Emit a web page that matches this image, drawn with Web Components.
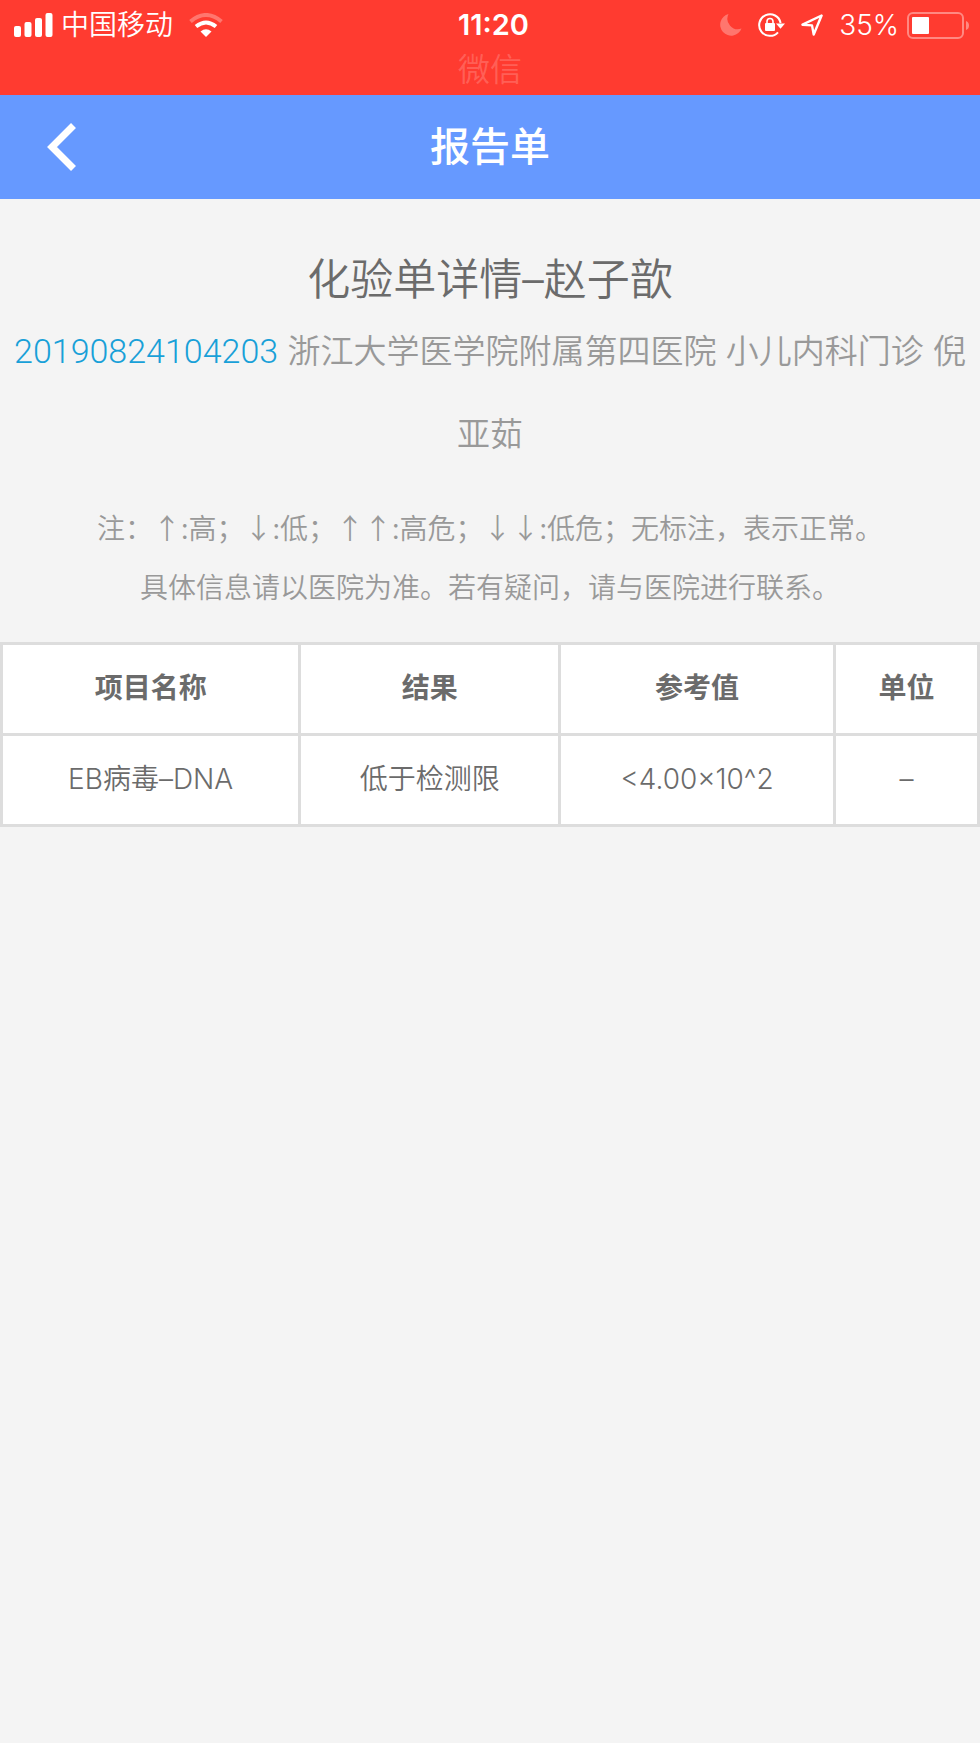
<!DOCTYPE html>
<html lang="zh-CN">
<head>
<meta charset="utf-8">
<meta name="viewport" content="width=device-width, initial-scale=1">
<title>报告单</title>
<style>
    body{
        margin: 0;
        background: #f4f4f4;
        color: #6b6b6b;
        font-family: Inter, "Noto Sans CJK SC", sans-serif;
    }
</style>
</head>
<body>
<status-bar>
    <span slot="carrier">中国移动</span>
    <span slot="time">11:20</span>
    <span slot="battery">35%</span>
    <span slot="app">微信</span>
</status-bar>
<nav-header>报告单</nav-header>
<report-detail>
    <span slot="title">化验单详情–赵子歆</span>
    <span slot="number">20190824104203</span>
    <span slot="source">浙江大学医学院附属第四医院 小儿内科门诊 倪亚茹</span>
    <span slot="note">注：↑:高；↓:低；↑↑:高危；↓↓:低危；无标注，表示正常。<br>具体信息请以医院为准。若有疑问，请与医院进行联系。</span>
</report-detail>
<result-table></result-table>

<script>
const statusTemplate = document.createElement("template");
statusTemplate.innerHTML = `
<style>
    :host{
        display: block;
        height: 95px;
        background: #ff3b30;
        color: #fff;
        font-size: 28px;
    }
    .Status_row{
        display: grid;
        grid-template-columns: 1fr auto 1fr;
        align-items: center;
        height: 50px;
        padding: 0 7px 0 14px;
        line-height: 50px;
    }
    .Status_side{
        display: flex;
        align-items: center;
        gap: 16px;
        font-weight: 350;
    }
    .Status_side--end{
        justify-content: flex-end;
    }
    .Status_pair{
        display: flex;
        align-items: center;
        gap: 8px;
    }
    .Status_time{
        font-size: 29px;
        font-weight: 600;
    }
    .Status_app{
        font-size: 32px;
        font-weight: 350;
        line-height: 40px;
        text-align: center;
        color: rgba(255,255,255,.2);
    }
    svg{
        display: block;
        flex: none;
    }
</style>
<div class="Status_row">
    <div class="Status_side">
        <div class="Status_pair">
            <svg width="39" height="24" viewBox="0 0 39 24" fill="#fff">
                <rect x="0" y="13" width="7" height="11" rx="2"/>
                <rect x="10.500" y="9" width="7" height="15" rx="2"/>
                <rect x="21" y="5" width="7" height="19" rx="2"/>
                <rect x="31.500" y="0" width="7" height="24" rx="2"/>
            </svg>
            <slot name="carrier"></slot>
        </div>
        <svg width="34" height="24" viewBox="0 0 34 24" fill="none" stroke="#fff">
            <path d="M1.500 8.500Q17-4.500 32.500 8.500" stroke-width="4" opacity=".3"/>
            <path d="M7 13.500Q17 5.500 27 13.500" stroke-width="4"/>
            <path d="M11.500 18.500Q17 14 22.500 18.500L17 24z" fill="#fff" stroke="none"/>
        </svg>
    </div>
    <div class="Status_time"><slot name="time"></slot></div>
    <div class="Status_side Status_side--end">
        <svg width="22" height="22" viewBox="0 0 22 22">
            <path d="M8.500 0A11 11 0 1 0 21.500 14.500A10.500 10.500 0 0 1 8.500 0z" fill="#fff" opacity=".3"/>
        </svg>
        <svg width="27" height="24" viewBox="0 0 27 24">
            <path d="M20 19.300A10.800 10.800 0 1 1 22.600 10" fill="none" stroke="#fff" stroke-width="2"/>
            <path d="M18 10.500H27L22.500 15.800z" fill="#fff"/>
            <rect x="7" y="10" width="10" height="8" rx="1" fill="#fff"/>
            <path d="M9 10.500V8.500a3 3 0 0 1 6 0V10.500" fill="none" stroke="#fff" stroke-width="1.600"/>
        </svg>
        <svg width="22" height="22" viewBox="0 0 22 22" fill="none" stroke="#fff" stroke-width="2.400" stroke-linejoin="round">
            <path d="M20.600 1.500L1.500 10.700L11 11.400L12.700 20.500z"/>
        </svg>
        <div class="Status_pair">
            <slot name="battery"></slot>
            <svg width="66" height="27" viewBox="0 0 66 27">
                <rect x="1" y="1" width="55" height="25" rx="5" fill="none" stroke="#fff" stroke-width="2" opacity=".4"/>
                <rect x="5" y="5" width="17" height="17" rx="1" fill="#fff"/>
                <path d="M59 9q3 1 3 4.500t-3 4.500z" fill="#fff" opacity=".4"/>
            </svg>
        </div>
    </div>
</div>
<div class="Status_app"><slot name="app"></slot></div>`;

class StatusBar extends HTMLElement{
    constructor(){
        super();
        this.attachShadow({mode:"open"})
        this.shadowRoot.appendChild(statusTemplate.content.cloneNode(true));
    }
}

const navTemplate = document.createElement("template");
navTemplate.innerHTML = `
<style>
    :host{
        display: grid;
        grid-template-columns: 1fr auto 1fr;
        align-items: center;
        height: 104px;
        background: #6699ff;
        color: #fff;
    }
    .Nav_back{
        justify-self: start;
        margin: 0 0 0 47px;
        padding: 0;
        border: 0;
        background: none;
        color: inherit;
    }
    .Nav_back svg{
        display: block;
    }
    .Nav_title{
        margin: 0;
        font-size: 40px;
        font-weight: 500;
        line-height: 56px;
    }
</style>
<button class="Nav_back" type="button" aria-label="返回">
    <svg width="30" height="50" viewBox="0 0 30 50" fill="none" stroke="currentColor" stroke-width="7">
        <path d="M26.500 3.500L5 25L26.500 46.500"/>
    </svg>
</button>
<h1 class="Nav_title"><slot></slot></h1>`;

class NavHeader extends HTMLElement{
    constructor(){
        super();
        this.attachShadow({mode:"open"})
        this.shadowRoot.appendChild(navTemplate.content.cloneNode(true));
    }
}

const detailTemplate = document.createElement("template");
detailTemplate.innerHTML = `
<style>
    :host{
        display: block;
        padding: 49px 8px 26px;
        text-align: center;
        color: #999;
    }
    h2, p{
        margin: 0;
        font-weight: 350;
    }
    .Detail_title{
        font-size: 43px;
        line-height: 62px;
        color: #6b6b6b;
    }
    .Detail_source{
        font-size: 33px;
        line-height: 83px;
    }
    .Detail_number{
        font-family: Roboto, sans-serif;
        font-size: 34px;
        color: #18a0d8;
    }
    .Detail_note{
        margin-top: 22px;
        font-family: "Noto Sans CJK SC", sans-serif;
        font-size: 28px;
        line-height: 59px;
    }
</style>
<h2 class="Detail_title"><slot name="title"></slot></h2>
<p class="Detail_source"><span class="Detail_number"><slot name="number"></slot></span> <slot name="source"></slot></p>
<p class="Detail_note"><slot name="note"></slot></p>`;

class ReportDetail extends HTMLElement{
    constructor(){
        super();
        this.attachShadow({mode:"open"})
        this.shadowRoot.appendChild(detailTemplate.content.cloneNode(true));
    }
}

const tableTemplate = document.createElement("template");
tableTemplate.innerHTML = `
<style>
    :host{
        display: block;
    }
    table{
        width: 100%;
        table-layout: fixed;
        border-collapse: collapse;
        background: #fff;
        font-size: 28px;
        line-height: 40px;
    }
    th, td{
        height: 85px;
        padding: 0 0 3px;
        border: 3px solid #ddd;
        text-align: center;
        font-weight: 350;
    }
    th{
        font-weight: 700;
    }
    .Table_name{ width: 30.6% }
    .Table_result{ width: 26.6% }
    .Table_range{ width: 28.2% }
    .Table_unit{ width: 14.6% }
</style>
<table>
    <thead>
        <tr>
            <th class="Table_name" scope="col">项目名称</th>
            <th class="Table_result" scope="col">结果</th>
            <th class="Table_range" scope="col">参考值</th>
            <th class="Table_unit" scope="col">单位</th>
        </tr>
    </thead>
    <tbody>
        <tr>
            <td>EB病毒–DNA</td>
            <td>低于检测限</td>
            <td>&lt;4.00×10^2</td>
            <td>–</td>
        </tr>
    </tbody>
</table>`;

class ResultTable extends HTMLElement{
    constructor(){
        super();
        this.attachShadow({mode:"open"})
        this.shadowRoot.appendChild(tableTemplate.content.cloneNode(true));
    }
}

window.customElements.define("status-bar", StatusBar)
window.customElements.define("nav-header", NavHeader)
window.customElements.define("report-detail", ReportDetail)
window.customElements.define("result-table", ResultTable)
</script>
</body>
</html>
